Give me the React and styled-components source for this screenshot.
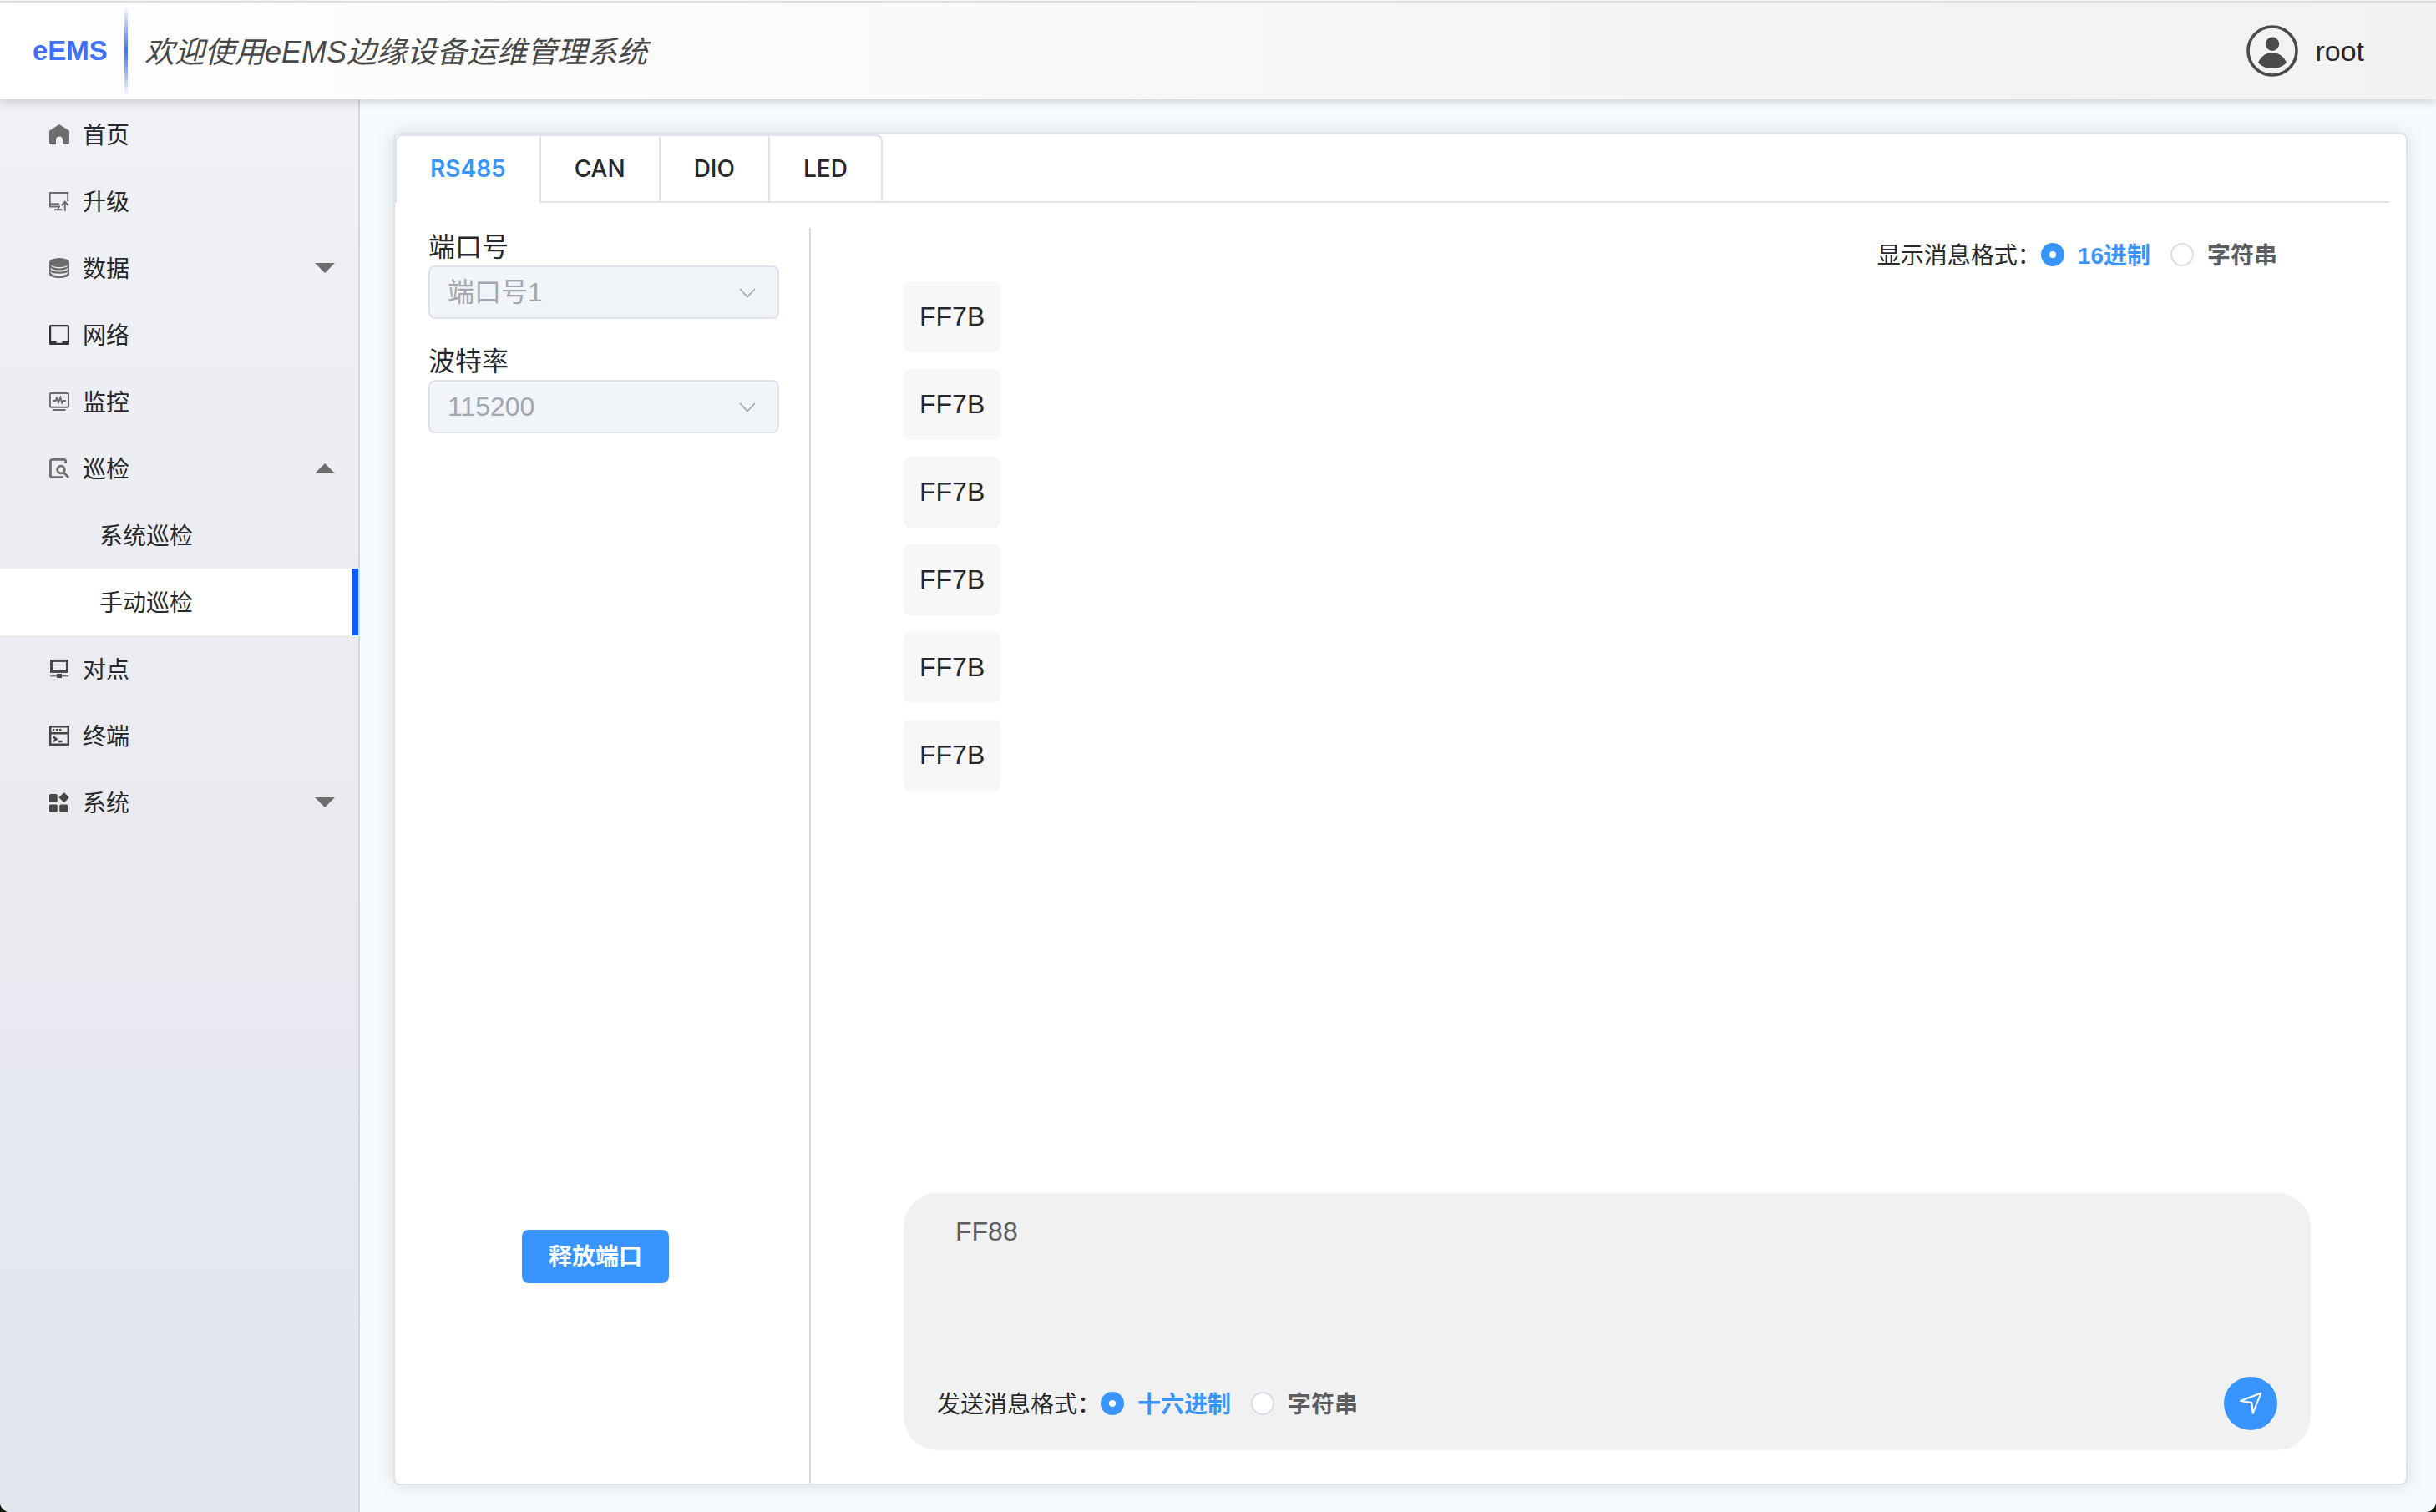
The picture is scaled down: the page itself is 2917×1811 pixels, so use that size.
import React, { useState } from "react";
import styled, { createGlobalStyle, css } from "styled-components";

const GlobalStyle = createGlobalStyle`
  *, *::before, *::after { box-sizing: border-box; }
  body {
    margin: 0;
    background: #0c1604;
    color: #27282b;
    font-family: "Liberation Sans", "Noto Sans CJK SC", sans-serif;
    font-size: 28px;
  }
  button, select, textarea, input { font: inherit; color: inherit; margin: 0; }
`;

const Page = styled.div`
  min-height: 100vh;
  display: flex;
  flex-direction: column;
  background: #f6fbfe;
  border-top: 1px solid #f4f6f5;
  border-radius: 0 0 12px 12px;
  overflow: hidden;
`;

const Header = styled.header`
  position: relative;
  z-index: 1;
  height: 118px;
  flex: none;
  display: flex;
  align-items: center;
  padding: 0 86px 0 39px;
  border-top: 2px solid #dce0de;
  background: linear-gradient(90deg, #ffffff, #fcfafb 30%, #f3f3f3 85%, #f2f2f2);
  box-shadow: 0 2px 12px rgba(0, 0, 0, 0.2);
`;

const Logo = styled.a`
  color: #3e6fff;
  font-size: 33px;
  font-weight: 700;
  text-decoration: none;
`;

const HeaderRule = styled.span`
  width: 4px;
  height: 108px;
  margin: 0 20px;
  background: linear-gradient(180deg, rgba(62, 111, 255, 0), #3e6fff 50%, rgba(62, 111, 255, 0));
`;

const Title = styled.h1`
  margin: 0;
  padding-bottom: 4px;
  flex: 1;
  color: #484848;
  font-size: 36px;
  font-style: italic;
  font-weight: 400;
`;

const UserButton = styled.button`
  display: flex;
  align-items: center;
  gap: 20px;
  padding: 0;
  border: 0;
  background: none;
  font-size: 34px;
`;

const Body = styled.div`
  flex: 1;
  display: flex;
`;

const Sidebar = styled.nav`
  width: 431px;
  flex: none;
  padding-top: 2px;
  border-right: 2px solid #d5d8e1;
  background: linear-gradient(180deg, #f0f1f6, #eaebf1 50%, #e3e6ee);
`;

const MenuItem = styled.button`
  width: 100%;
  height: 80px;
  display: flex;
  align-items: center;
  gap: 16px;
  padding: 0 28px 0 59px;
  border: 0;
  background: none;
  text-align: left;
  ${(p) => p.$nested && css`padding-left: 119px;`}
  ${(p) => p.$active && css`
    background: #ffffff;
    border-right: 8px solid #0c5cff;
  `}
`;

const MenuLabel = styled.span`
  flex: 1;
  padding-bottom: 2px;
`;

const Icon = styled.svg`
  display: block;
  flex: none;
`;

const Main = styled.main`
  flex: 1;
  min-width: 0;
  display: flex;
  padding: 40px 34px 32px 40px;
`;

const Card = styled.section`
  flex: 1;
  min-width: 0;
  display: flex;
  flex-direction: column;
  padding-right: 20px;
  border: 2px solid #dfe2ea;
  border-radius: 8px;
  background: #ffffff;
  box-shadow: 0 0 24px rgba(0, 0, 0, 0.12);
`;

const TabBar = styled.div`
  display: flex;
  height: 82px;
`;

const TabGroup = styled.div`
  display: flex;
  border: 2px solid #dfe2ea;
  border-bottom: 0;
  border-radius: 8px 8px 0 0;
`;

const TabFiller = styled.div`
  flex: 1;
  border-bottom: 2px solid #dfe3e9;
`;

const Tab = styled.button`
  padding: 0 40px;
  border: 0;
  border-bottom: 2px solid ${(p) => (p.$active ? "#ffffff" : "#dfe2ea")};
  background: none;
  color: ${(p) => (p.$active ? "#3895ff" : "#27282b")};
  font-family: Inter, "Noto Sans CJK SC", sans-serif;
  font-weight: ${(p) => (p.$active ? 600 : 500)};
  & + & { border-left: 2px solid #dfe2ea; }
`;

const Content = styled.div`
  flex: 1;
  display: flex;
  padding-top: 30px;
`;

const Settings = styled.form`
  width: 498px;
  flex: none;
  display: flex;
  flex-direction: column;
  padding: 0 36px 240px 40px;
  border-right: 2px solid #d5d8e0;
`;

const Field = styled.div`
  margin-bottom: 28px;
`;

const FieldLabel = styled.label`
  display: block;
  height: 45px;
  font-size: 32px;
  line-height: 47px;
`;

const SelectBox = styled.div`
  position: relative;
  height: 64px;
`;

const Select = styled.select`
  width: 100%;
  height: 64px;
  padding: 0 60px 0 21px;
  border: 2px solid #dfe2ea;
  border-radius: 8px;
  background: #f1f5f9;
  color: #a3a6ae;
  font-size: 32px;
  appearance: none;
  opacity: 1;
`;

const SelectArrow = styled(Icon)`
  position: absolute;
  right: 28px;
  top: 27px;
  pointer-events: none;
`;

const SettingsActions = styled.div`
  width: 400px;
  margin-top: auto;
  display: flex;
  justify-content: center;
`;

const PrimaryButton = styled.button`
  height: 64px;
  padding: 0 32px 4px;
  border: 0;
  border-radius: 8px;
  background: #3895ff;
  color: #ffffff;
  font-weight: 700;
`;

const Chat = styled.div`
  flex: 1;
  min-width: 0;
  display: flex;
  flex-direction: column;
  padding: 0 94px 40px 111px;
`;

const Toolbar = styled.div`
  height: 64px;
  display: flex;
  justify-content: flex-end;
  padding-right: 40px;
`;

const FormatGroup = styled.fieldset`
  display: flex;
  align-items: center;
  height: 64px;
  margin: 0;
  padding: 0;
  border: 0;
`;

const FormatText = styled.span`
  padding-bottom: 2px;
`;

const RadioLabel = styled.label`
  display: flex;
  align-items: center;
  gap: 16px;
  color: ${(p) => (p.$checked ? "#3895ff" : "#5b5d61")};
  font-weight: 700;
  & + & { margin-left: 24px; }
`;

const Radio = styled.input`
  appearance: none;
  width: 28px;
  height: 28px;
  border: 2px solid #dadde8;
  border-radius: 50%;
  background: #ffffff;
  &:checked { border: 10px solid #3895ff; }
`;

const MessageList = styled.ul`
  flex: 1;
  display: flex;
  flex-direction: column;
  align-items: flex-start;
  gap: 20px;
  margin: 0;
  padding: 0;
  list-style: none;
`;

const Message = styled.li`
  padding: 20px 19px;
  border-radius: 8px;
  background: #f7f7f7;
  font-size: 32px;
  line-height: 45px;
`;

const Composer = styled.form`
  height: 308px;
  display: flex;
  flex-direction: column;
  padding: 20px 40px 24px;
  border-radius: 40px;
  background: #f1f1f1;
`;

const MessageInput = styled.textarea`
  flex: 1;
  padding: 4px 22px;
  border: 0;
  outline: 0;
  resize: none;
  background: none;
  color: #5b5d61;
  font-size: 32px;
  line-height: 45px;
`;

const ComposerFooter = styled.div`
  display: flex;
  justify-content: space-between;
`;

const SendButton = styled.button`
  width: 64px;
  height: 64px;
  padding: 0;
  border: 0;
  border-radius: 50%;
  background: #3895ff;
`;

const icons = {
  home: (
    <path fill="#6c6c6c" d="M12 0 23 7a2 2 0 0 1 1 2v13a2 2 0 0 1-2 2h-6v-5.500a4 4 0 0 0-8 0V24H2a2 2 0 0 1-2-2V9a2 2 0 0 1 1-2z" />
  ),
  upgrade: (
    <g fill="none" stroke="#6c6c6c" strokeWidth="1.900">
      <path d="M22.200 12V2H.8v16.500H13M.8 15.300H12M6 22.300h9.500M11 18.500v3.800M18.800 23.700V12.600M14.800 17l4-4.300 4 4.300" />
    </g>
  ),
  data: (
    <g fill="none" stroke="#6c6c6c" strokeWidth="2.200">
      <ellipse cx="12" cy="5.500" rx="12" ry="5.500" fill="#6c6c6c" stroke="none" />
      <path d="M1 9c0 6 22 6 22 0M1 13.500c0 5.500 22 5.500 22 0M1 18c0 6 22 6 22 0" />
      <path strokeWidth="1.600" d="M.8 6v14c2 4.300 20.400 4.300 22.400 0V6" />
    </g>
  ),
  network: (
    <path fill="#333333" fillRule="evenodd" d="M1.500 0h21A1.500 1.500 0 0 1 24 1.500v21a1.500 1.500 0 0 1-1.500 1.500h-21A1.500 1.500 0 0 1 0 22.500v-21A1.500 1.500 0 0 1 1.500 0zM2.200 2.200v17.300H8.500v2.200h7v-2.200h6.300V2.200z" />
  ),
  monitor: (
    <g fill="none" stroke="#6c6c6c" strokeWidth="2">
      <rect x=".9" y="1.900" width="22.200" height="16.800" rx="1.200" />
      <path d="M4 11h3.500l1.500-3 2 5 2.300-6 2 6.500 1.500-2.500H20M4.500 22h15" />
    </g>
  ),
  inspect: (
    <g fill="none" stroke="#6f6f6f" strokeWidth="2.800">
      <path d="M19.700 6V3.400a2 2 0 0 0-2-2H3.400a2 2 0 0 0-2 2v17.200a2 2 0 0 0 2 2h13.300" />
      <circle cx="14" cy="13.500" r="4.300" />
      <path d="m17.200 17 6 6" />
    </g>
  ),
  point: (
    <g fill="none" stroke="#474747">
      <rect x="2.500" y="2.400" width="19" height="13" strokeWidth="3" />
      <path stroke="#777777" strokeWidth="1.800" d="M1 20.500h22" />
      <path fill="#474747" stroke="none" d="M9 18h6v5H9z" />
    </g>
  ),
  terminal: (
    <g fill="none" stroke="#444444" strokeWidth="2.400">
      <path d="M1.200 1.200h21.600v21.600H1.200zM1 9.300h22M5 13.500l3.500 2.700L5 19M11 19h4.500" />
      <path d="M4 5.300h2.400M8 5.300h2.400M12 5.300h2.400" />
    </g>
  ),
  system: (
    <g fill="#474747">
      <rect y="2" width="9.700" height="9.700" rx="1.500" />
      <rect y="14.500" width="9.700" height="9.500" rx="1.500" />
      <rect x="12.300" y="14.500" width="9.700" height="9.500" rx="1.500" />
      <rect x="13.300" y="1.800" width="8.800" height="8.800" rx="1" transform="rotate(45 17.700 6.200)" />
    </g>
  ),
};

const menu = [
  { icon: "home", label: "首页" },
  { icon: "upgrade", label: "升级" },
  { icon: "data", label: "数据", caret: "down" },
  { icon: "network", label: "网络" },
  { icon: "monitor", label: "监控" },
  { icon: "inspect", label: "巡检", caret: "up" },
  { label: "系统巡检", nested: true },
  { label: "手动巡检", nested: true, active: true },
  { icon: "point", label: "对点" },
  { icon: "terminal", label: "终端" },
  { icon: "system", label: "系统", caret: "down" },
];

const tabs = ["RS485", "CAN", "DIO", "LED"];
const messages = ["FF7B", "FF7B", "FF7B", "FF7B", "FF7B", "FF7B"];

function Caret({ direction }) {
  return (
    <Icon width="24" height="12" viewBox="0 0 24 12" aria-hidden="true">
      <path fill="#6c6d6d" d={direction === "up" ? "M0 12 12 0l12 12z" : "M0 0h24L12 12z"} />
    </Icon>
  );
}

function SelectField({ id, label, value }) {
  return (
    <Field>
      <FieldLabel htmlFor={id}>{label}</FieldLabel>
      <SelectBox>
        <Select id={id} disabled defaultValue={value}>
          <option>{value}</option>
        </Select>
        <SelectArrow width="20" height="12" viewBox="0 0 20 12" aria-hidden="true">
          <path fill="none" stroke="#a6a9b1" strokeWidth="1.800" d="m1 1 9 9.500L19 1" />
        </SelectArrow>
      </SelectBox>
    </Field>
  );
}

function FormatPicker({ name, label, options }) {
  const [selected, setSelected] = useState(options[0]);
  return (
    <FormatGroup aria-label={label}>
      <FormatText>{label}：</FormatText>
      {options.map((option) => (
        <RadioLabel key={option} $checked={option === selected}>
          <Radio
            type="radio"
            name={name}
            checked={option === selected}
            onChange={() => setSelected(option)}
          />
          <FormatText>{option}</FormatText>
        </RadioLabel>
      ))}
    </FormatGroup>
  );
}

export default function App() {
  const [tab, setTab] = useState("RS485");
  return (
    <>
      <GlobalStyle />
      <Page>
        <Header>
          <Logo href="#">eEMS</Logo>
          <HeaderRule />
          <Title>欢迎使用eEMS边缘设备运维管理系统</Title>
          <UserButton type="button">
            <Icon width="62" height="62" viewBox="0 0 62 62" aria-hidden="true">
              <circle cx="31" cy="31" r="29" fill="none" stroke="#4a4a4a" strokeWidth="3.600" />
              <circle cx="31" cy="22.700" r="8.200" fill="#4a4a4a" />
              <path fill="#4a4a4a" d="M14 45c3-7 9-12 17-12s14 5 17 12c-4 4.500-10 7-17 7s-13-2.500-17-7z" />
            </Icon>
            root
          </UserButton>
        </Header>
        <Body>
          <Sidebar>
            {menu.map((item) => (
              <MenuItem key={item.label} type="button" $nested={item.nested} $active={item.active}>
                {item.icon && (
                  <Icon width="24" height="24" viewBox="0 0 24 24" aria-hidden="true">
                    {icons[item.icon]}
                  </Icon>
                )}
                <MenuLabel>{item.label}</MenuLabel>
                {item.caret && <Caret direction={item.caret} />}
              </MenuItem>
            ))}
          </Sidebar>
          <Main>
            <Card>
              <TabBar>
                <TabGroup role="tablist">
                  {tabs.map((name) => (
                    <Tab
                      key={name}
                      type="button"
                      role="tab"
                      aria-selected={name === tab}
                      $active={name === tab}
                      onClick={() => setTab(name)}
                    >
                      {name}
                    </Tab>
                  ))}
                </TabGroup>
                <TabFiller />
              </TabBar>
              <Content>
                <Settings>
                  <SelectField id="port" label="端口号" value="端口号1" />
                  <SelectField id="baud" label="波特率" value="115200" />
                  <SettingsActions>
                    <PrimaryButton type="button">释放端口</PrimaryButton>
                  </SettingsActions>
                </Settings>
                <Chat>
                  <Toolbar>
                    <FormatPicker name="display" label="显示消息格式" options={["16进制", "字符串"]} />
                  </Toolbar>
                  <MessageList>
                    {messages.map((text, index) => (
                      <Message key={index}>{text}</Message>
                    ))}
                  </MessageList>
                  <Composer>
                    <MessageInput aria-label="消息" defaultValue="FF88" />
                    <ComposerFooter>
                      <FormatPicker name="send" label="发送消息格式" options={["十六进制", "字符串"]} />
                      <SendButton type="button" aria-label="发送">
                        <Icon width="64" height="64" viewBox="0 0 64 64" aria-hidden="true">
                          <path fill="none" stroke="#ffffff" strokeWidth="2" strokeLinejoin="round" d="M44.500 19.500 20 29l13.300 2L34.700 44z" />
                        </Icon>
                      </SendButton>
                    </ComposerFooter>
                  </Composer>
                </Chat>
              </Content>
            </Card>
          </Main>
        </Body>
      </Page>
    </>
  );
}
